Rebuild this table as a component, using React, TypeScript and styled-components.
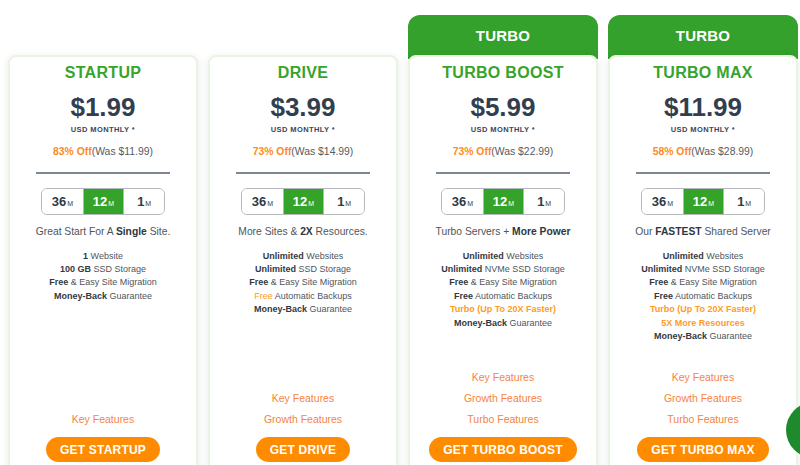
import React from "react";
import styled, { createGlobalStyle } from "styled-components";

const Global = createGlobalStyle`
  html, body { margin: 0; padding: 0; background: #ffffff; overflow: hidden; }
  body { font-family: "Liberation Sans", Arial, sans-serif; }
  * { box-sizing: border-box; }
`;

const Page = styled.div`
  width: 800px;
  height: 465px;
  overflow: hidden;
  position: relative;
  padding: 15px 0 0 8px;
`;

const Row = styled.div`
  display: flex;
  gap: 10px;
  align-items: stretch;
`;

const Column = styled.div`
  width: 190px;
  display: flex;
  flex-direction: column;
`;

const TurboHeader = styled.div`
  height: 44px;
  padding-bottom: 4px;
  display: flex;
  align-items: center;
  justify-content: center;
  background: #33a12b;
  border-radius: 12px 12px 0 0;
  color: #ffffff;
  font-weight: 700;
  font-size: 15px;
  letter-spacing: 0.2px;
`;

const HeaderSpacer = styled.div`
  height: 44px;
`;

const Card = styled.div`
  margin-top: -4px;
  height: 420px;
  background: #ffffff;
  border: 2px solid #eaf4e3;
  border-radius: 8px;
  box-shadow: 0 2px 8px rgba(0, 0, 0, 0.09);
  display: flex;
  flex-direction: column;
  align-items: center;
  padding: 6px 0 11px;
  text-align: center;
`;

const Title = styled.div`
  color: #37a42c;
  font-weight: 700;
  font-size: 16px;
  line-height: 20px;
  letter-spacing: 0.3px;
`;

const Price = styled.div`
  color: #323e4e;
  font-weight: 700;
  font-size: 26px;
  line-height: 32px;
  margin-top: 8px;
`;

const Period = styled.div`
  color: #3c4654;
  font-weight: 700;
  font-size: 7.5px;
  line-height: 10px;
  letter-spacing: 0.4px;
  margin-top: 2px;
`;

const Discount = styled.div`
  font-size: 10.4px;
  line-height: 14px;
  color: #555b63;
  margin-top: 10px;
`;

const Off = styled.span`
  color: #ff8a1c;
  font-weight: 700;
`;

const Divider = styled.div`
  width: 134px;
  height: 1.5px;
  background: #7d8791;
  margin-top: 13px;
`;

const Toggle = styled.div`
  margin-top: 14px;
  width: 124px;
  height: 27px;
  display: grid;
  grid-template-columns: 1fr 1fr 1fr;
  border: 1px solid #b3b8bd;
  border-radius: 6px;
  overflow: hidden;
`;

const Segment = styled.div<{ $active?: boolean }>`
  display: flex;
  align-items: center;
  justify-content: center;
  gap: 1px;
  background: ${(p) => (p.$active ? "#35a32a" : "#ffffff")};
  color: ${(p) => (p.$active ? "#ffffff" : "#2f3a48")};
  border-left: 1px solid #b3b8bd;
  &:first-child { border-left: none; }
`;

const Num = styled.span`
  font-weight: 700;
  font-size: 13px;
`;

const Unit = styled.span`
  font-size: 7px;
  margin-top: 4px;
`;

const Tagline = styled.div`
  font-size: 10.3px;
  line-height: 14px;
  color: #4f555c;
  margin-top: 10px;
  b { color: #2f3640; }
`;

const Features = styled.ul`
  list-style: none;
  margin: 11px 0 0;
  padding: 0;
`;

const Feature = styled.li<{ $accent?: boolean }>`
  font-size: 9px;
  line-height: 13.4px;
  color: ${(p) => (p.$accent ? "#ff9a2a" : "#50565d")};
  font-weight: ${(p) => (p.$accent ? 700 : 400)};
  b { color: #33393f; }
  em { font-style: normal; color: #ff9a2a; }
`;

const Links = styled.div`
  margin-top: auto;
  display: flex;
  flex-direction: column;
  align-items: center;
`;

const Link = styled.a`
  font-size: 10.5px;
  line-height: 21px;
  color: #f5843f;
  text-decoration: none;
`;

const Button = styled.button`
  margin-top: 7px;
  height: 25px;
  padding: 0 14px;
  border: none;
  border-radius: 13px;
  background: #ff8c00;
  color: #ffffff;
  font-family: "Liberation Sans", Arial, sans-serif;
  font-weight: 700;
  font-size: 12px;
  letter-spacing: 0.2px;
  cursor: pointer;
`;

const ChatBubble = styled.div`
  position: absolute;
  right: -42px;
  top: 402px;
  width: 56px;
  height: 56px;
  border-radius: 50%;
  background: #1d8a2e;
`;

type Plan = {
  name: string;
  price: string;
  off: string;
  was: string;
  turbo?: boolean;
  tagline: React.ReactNode;
  features: React.ReactNode[];
  accents?: number[];
  links: string[];
  cta: string;
};

const plans: Plan[] = [
  {
    name: "STARTUP",
    price: "$1.99",
    off: "83% Off",
    was: "(Was $11.99)",
    tagline: (
      <>
        Great Start For A <b>Single</b> Site.
      </>
    ),
    features: [
      <><b>1</b> Website</>,
      <><b>100 GB</b> SSD Storage</>,
      <><b>Free</b> &amp; Easy Site Migration</>,
      <><b>Money-Back</b> Guarantee</>,
    ],
    links: ["Key Features"],
    cta: "GET STARTUP",
  },
  {
    name: "DRIVE",
    price: "$3.99",
    off: "73% Off",
    was: "(Was $14.99)",
    tagline: (
      <>
        More Sites &amp; <b>2X</b> Resources.
      </>
    ),
    features: [
      <><b>Unlimited</b> Websites</>,
      <><b>Unlimited</b> SSD Storage</>,
      <><b>Free</b> &amp; Easy Site Migration</>,
      <><em>Free</em> Automatic Backups</>,
      <><b>Money-Back</b> Guarantee</>,
    ],
    links: ["Key Features", "Growth Features"],
    cta: "GET DRIVE",
  },
  {
    name: "TURBO BOOST",
    price: "$5.99",
    off: "73% Off",
    was: "(Was $22.99)",
    turbo: true,
    tagline: (
      <>
        Turbo Servers + <b>More Power</b>
      </>
    ),
    features: [
      <><b>Unlimited</b> Websites</>,
      <><b>Unlimited</b> NVMe SSD Storage</>,
      <><b>Free</b> &amp; Easy Site Migration</>,
      <><b>Free</b> Automatic Backups</>,
      <>Turbo (Up To 20X Faster)</>,
      <><b>Money-Back</b> Guarantee</>,
    ],
    accents: [4],
    links: ["Key Features", "Growth Features", "Turbo Features"],
    cta: "GET TURBO BOOST",
  },
  {
    name: "TURBO MAX",
    price: "$11.99",
    off: "58% Off",
    was: "(Was $28.99)",
    turbo: true,
    tagline: (
      <>
        Our <b>FASTEST</b> Shared Server
      </>
    ),
    features: [
      <><b>Unlimited</b> Websites</>,
      <><b>Unlimited</b> NVMe SSD Storage</>,
      <><b>Free</b> &amp; Easy Site Migration</>,
      <><b>Free</b> Automatic Backups</>,
      <>Turbo (Up To 20X Faster)</>,
      <>5X More Resources</>,
      <><b>Money-Back</b> Guarantee</>,
    ],
    accents: [4, 5],
    links: ["Key Features", "Growth Features", "Turbo Features"],
    cta: "GET TURBO MAX",
  },
];

const terms = [
  { n: "36", active: false },
  { n: "12", active: true },
  { n: "1", active: false },
];

function PlanCard({ plan }: { plan: Plan }) {
  return (
    <Column>
      {plan.turbo ? <TurboHeader>TURBO</TurboHeader> : <HeaderSpacer />}
      <Card>
        <Title>{plan.name}</Title>
        <Price>{plan.price}</Price>
        <Period>USD MONTHLY *</Period>
        <Discount>
          <Off>{plan.off}</Off>
          {plan.was}
        </Discount>
        <Divider />
        <Toggle>
          {terms.map((t) => (
            <Segment key={t.n} $active={t.active}>
              <Num>{t.n}</Num>
              <Unit>M</Unit>
            </Segment>
          ))}
        </Toggle>
        <Tagline>{plan.tagline}</Tagline>
        <Features>
          {plan.features.map((f, i) => (
            <Feature key={i} $accent={plan.accents?.includes(i)}>
              {f}
            </Feature>
          ))}
        </Features>
        <Links>
          {plan.links.map((l) => (
            <Link key={l} href="#">
              {l}
            </Link>
          ))}
        </Links>
        <Button>{plan.cta}</Button>
      </Card>
    </Column>
  );
}

export default function App() {
  return (
    <>
      <Global />
      <Page>
        <Row>
          {plans.map((p) => (
            <PlanCard key={p.name} plan={p} />
          ))}
        </Row>
        <ChatBubble />
      </Page>
    </>
  );
}
